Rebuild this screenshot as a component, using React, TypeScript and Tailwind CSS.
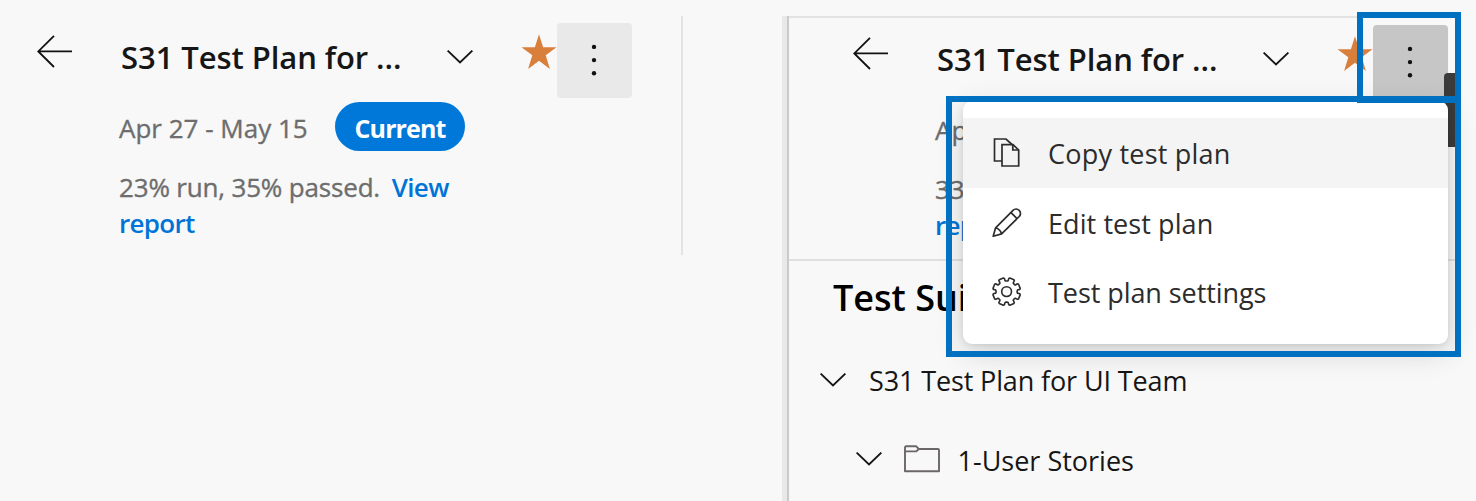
import React from "react";

type IconProps = { className?: string };

function BackArrow({ className }: IconProps) {
  return (
    <svg className={className} width="36" height="34" viewBox="0 0 36 34" fill="none" stroke="currentColor" strokeWidth="1.8">
      <path d="M1.3 17.4H35M17 1.8L1.3 17.4L17 33" />
    </svg>
  );
}

function Chevron({ className }: IconProps) {
  return (
    <svg className={className} width="26" height="14" viewBox="0 0 26 14" fill="none" stroke="currentColor" strokeWidth="1.9">
      <path d="M0.6 0.6L13 12.4L25.4 0.6" />
    </svg>
  );
}

function Star({ className }: IconProps) {
  return (
    <svg className={className} width="36" height="36" viewBox="0 0 36 36" fill="#d97f3c">
      <path d="M18 0.3L22.1 13.2H35.5L24.7 21.2L28.9 35L18 26.8L7.1 35L11.3 21.2L0.5 13.2H13.9Z" />
    </svg>
  );
}

function MoreDots() {
  return (
    <svg className="mr-px mb-px" width="6" height="32" viewBox="0 0 6 32" fill="#111">
      <circle cx="3" cy="2.9" r="2.2" />
      <circle cx="3" cy="16.1" r="2.2" />
      <circle cx="3" cy="29.3" r="2.2" />
    </svg>
  );
}

function CopyIcon() {
  return (
    <svg width="30" height="30" viewBox="0 0 30 30" fill="none" stroke="#2c2c2c" strokeWidth="1.7">
      <path d="M10 23H2.5V1H14L20 6.5" />
      <path d="M10 6.6H21L26.7 12V28H10Z" />
      <path d="M20.8 6.8V12H26.6" />
    </svg>
  );
}

function PencilIcon() {
  return (
    <svg width="30" height="30" viewBox="0 0 30 30" fill="none" stroke="#2c2c2c" strokeWidth="1.7" strokeLinejoin="round">
      <path d="M1.2 28.2L3.6 19.8L21 2.3A4.2 4.2 0 0 1 27.2 8.5L9.6 25.9Z" />
      <path d="M18.8 4.4L25 10.7M3.6 19.8Q8.2 21.2 9.6 25.9" />
    </svg>
  );
}

function gearOutline(teeth: number) {
  const pts: string[] = [];
  for (let i = 0; i < teeth; i++) {
    const base = (i * 360) / teeth + 22.5;
    [
      [10.6, -18.5],
      [11, -14.5],
      [13.4, -13],
      [14, -9],
      [14, 9],
      [13.4, 13],
      [11, 14.5],
      [10.6, 18.5],
    ].forEach(([r, d]) => {
      const a = ((base + d) * Math.PI) / 180;
      pts.push(`${(14.6 + r * Math.cos(a)).toFixed(2)},${(14.6 + r * Math.sin(a)).toFixed(2)}`);
    });
  }
  return pts.join(" ");
}

function GearIcon() {
  return (
    <svg width="30" height="30" viewBox="0 0 30 30" fill="none" stroke="#2c2c2c" strokeWidth="1.6" strokeLinejoin="round">
      <polygon points={gearOutline(8)} />
      <circle cx="14.6" cy="14.6" r="4.9" />
    </svg>
  );
}

function FolderIcon({ className }: IconProps) {
  return (
    <svg className={className} width="36" height="28" viewBox="0 0 36 28" fill="none" stroke="#6b6668" strokeWidth="1.9" strokeLinejoin="round">
      <path d="M1 2.5Q1 1.3 2.2 1.3H12.3L14.8 4H34Q35 4 35 5V26.3H1Z" />
      <path d="M1 6.4H12.3L14.8 4" />
    </svg>
  );
}

type PlanHeaderProps = { run: number; passed: number; open?: boolean };

function PlanHeader({ run, passed, open }: PlanHeaderProps) {
  return (
    <header className="flex items-start pt-[7px]">
      <BackArrow className="mt-[11px] shrink-0 text-[#111]" />
      <div className="ml-[46px] w-[513px] shrink-0">
        <div className="flex h-[75px] items-start">
          <h1 className="mt-[14px] w-[327.5px] whitespace-nowrap pl-[2px] text-[31px] leading-10 font-semibold tracking-[-0.07px] text-[#161616]">
            S31 Test Plan for ...
          </h1>
          <Chevron className="mt-[27px] shrink-0 text-[#161616]" />
          <Star className="mt-[11px] ml-[48.5px] shrink-0" />
          <button
            className={
              open
                ? "flex size-[75px] shrink-0 items-center justify-center rounded bg-[#c6c6c6]"
                : "flex size-[75px] shrink-0 items-center justify-center rounded bg-[#e9e9e9]"
            }
          >
            <MoreDots />
          </button>
        </div>
        <div className="mt-1 flex h-[49px] items-center">
          <span className="w-[216px] whitespace-nowrap pt-[2px] text-[26px] leading-9 text-[#6d6d6d] [-webkit-text-stroke:0.35px_#6d6d6d]">
            Apr 27 - May 15
          </span>
          <span className="flex h-[49px] w-[130px] items-center justify-center rounded-full bg-[#0078d9] pt-[2px] text-[25px] leading-9 font-bold tracking-[-0.9px] text-white">
            Current
          </span>
        </div>
        <p className="mt-[18px] w-[350px] text-[26px] leading-9 text-[#6d6d6d]">
          <span className="whitespace-nowrap tracking-[-0.17px] [-webkit-text-stroke:0.35px_#6d6d6d]">{`${run}% run, ${passed}% passed.`}</span>{" "}
          <a className="font-semibold tracking-[-0.7px] text-[#0074d6]">
            <span className="ml-[5px]">View</span>
            <br />
            report
          </a>
        </p>
      </div>
    </header>
  );
}

const menuItems = [
  { label: "Copy test plan", icon: <CopyIcon />, row: "bg-[#f4f4f4]", text: "tracking-[0.22px]" },
  { label: "Edit test plan", icon: <PencilIcon />, row: "", text: "tracking-[0.08px]" },
  { label: "Test plan settings", icon: <GearIcon />, row: "", text: "tracking-[-0.07px]" },
];

function PlanMenu() {
  return (
    <ul className="w-[485px] rounded-[9px] bg-white pt-[17px] pb-[17px] shadow-[0_8px_30px_rgba(0,0,0,0.16),0_1px_6px_rgba(0,0,0,0.1)]">
      {menuItems.map((item) => (
        <li key={item.label} className={`flex h-[69.7px] items-center pl-[29px] ${item.row}`}>
          {item.icon}
          <span className={`ml-[26px] whitespace-nowrap pt-[2px] text-[27px] leading-10 text-[#2c2c2c] ${item.text}`}>{item.label}</span>
        </li>
      ))}
    </ul>
  );
}

export default function App() {
  return (
    <div className="relative flex h-[501px] w-[1476px] items-start overflow-hidden bg-[#f8f8f8] pt-4 font-['Open_Sans','Noto_Sans',sans-serif]">
      <section className="h-[239px] w-[683px] shrink-0 border-r-2 border-[#e3e3e3] pl-[37px]">
        <PlanHeader run={23} passed={35} />
      </section>

      <section className="relative ml-[99px] flex h-[485px] w-[673px] shrink-0 overflow-hidden">
        <div className="w-[7px] shrink-0 border-r-2 border-[#cacaca] bg-[#e8e8e8]" />
        <div className="min-w-0 flex-1 border-t-2 border-[#e3e3e3]">
          <div className="h-[243px] border-b-2 border-[#e0e0e0] pl-16">
            <PlanHeader run={33} passed={35} open />
          </div>
          <h2 className="mt-[13px] pl-[44px] text-[36px] leading-[48px] font-semibold text-black">Test Suites</h2>
          <div className="mt-[18px] flex h-20 items-center pl-[31px] text-[#161616]">
            <Chevron className="mb-px shrink-0" />
            <span className="ml-[23px] whitespace-nowrap pt-[2px] text-[27px] leading-10 tracking-[-0.13px]">S31 Test Plan for UI Team</span>
          </div>
          <div className="flex h-20 items-center pl-[66.5px] text-[#161616]">
            <Chevron className="mb-[2px] shrink-0" />
            <FolderIcon className="mb-[3px] ml-[22px] shrink-0" />
            <span className="ml-[18px] whitespace-nowrap pt-px text-[27px] leading-10">1-User Stories</span>
          </div>
        </div>
        <div className="absolute top-[57px] right-0 h-[74px] w-[11px] rounded-tl bg-[#3b3b3b]" />
      </section>

      <div className="absolute top-[101px] left-[963px]">
        <PlanMenu />
      </div>
      <div className="absolute top-[12px] left-[1357px] h-[91px] w-[104px] border-[6px] border-[#0070c0]" />
      <div className="absolute top-[96px] left-[946px] h-[261px] w-[515px] border-[6px] border-[#0070c0]" />
    </div>
  );
}
